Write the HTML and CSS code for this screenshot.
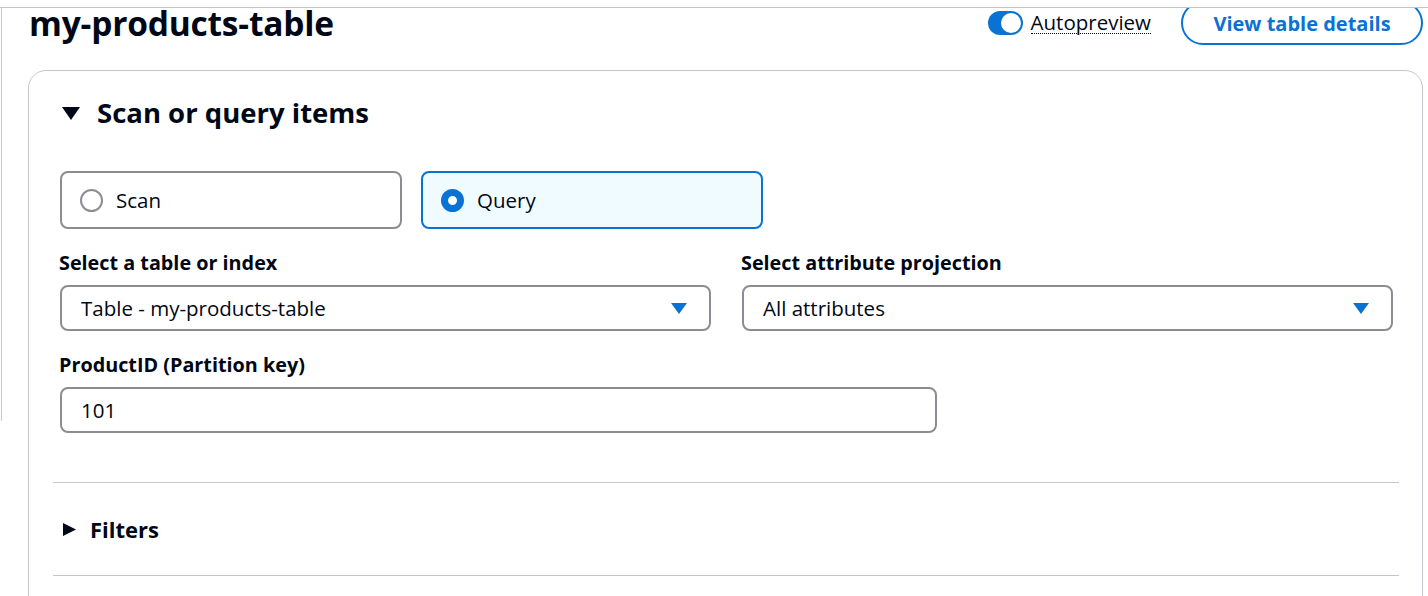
FILE: index.html
```html
<!DOCTYPE html>
<html lang="en">
<head>
<meta charset="utf-8">
<title>my-products-table</title>
<link rel="stylesheet" href="styles.css">
</head>
<body>
<div class="viewport">
  <div class="rail"></div>
  <main class="page">
    <header class="page-header">
      <h1 class="title">my-products-table</h1>
      <div class="actions">
        <label class="toggle">
          <span class="toggle-track"><span class="toggle-knob"></span></span>
          <span class="toggle-label">Autopreview</span>
        </label>
        <button class="btn-outline" type="button">View table details</button>
      </div>
    </header>

    <section class="card">
      <div class="card-header">
        <svg class="caret-down" width="18" height="13" viewBox="0 0 18 13"><polygon points="0,0 18,0 9,13" fill="#000716"/></svg>
        <h2 class="card-title">Scan or query items</h2>
      </div>

      <div class="card-body">
        <div class="tiles">
          <div class="tile">
            <span class="radio"></span>
            <span class="tile-text">Scan</span>
          </div>
          <div class="tile tile-selected">
            <span class="radio radio-checked"></span>
            <span class="tile-text">Query</span>
          </div>
        </div>

        <div class="field-grid">
          <div class="field">
            <div class="field-label">Select a table or index</div>
            <div class="select">
              <span>Table - my-products-table</span>
              <svg class="select-caret" width="16" height="11" viewBox="0 0 16 11"><polygon points="0,0 16,0 8,11" fill="#0972d3"/></svg>
            </div>
          </div>
          <div class="field">
            <div class="field-label">Select attribute projection</div>
            <div class="select">
              <span>All attributes</span>
              <svg class="select-caret" width="16" height="11" viewBox="0 0 16 11"><polygon points="0,0 16,0 8,11" fill="#0972d3"/></svg>
            </div>
          </div>
        </div>

        <div class="field field-key">
          <div class="field-label">ProductID (Partition key)</div>
          <div class="input">101</div>
        </div>
      </div>

      <div class="divider"></div>
      <div class="filters-row">
        <svg class="caret-right" width="13" height="13" viewBox="0 0 13 13"><polygon points="0,0 13,6.5 0,13" fill="#000716"/></svg>
        <h3 class="filters-title">Filters</h3>
      </div>
      <div class="divider"></div>
      <div class="card-tail"></div>
    </section>
  </main>
</div>
</body>
</html>
```

FILE: styles.css
```css
* { box-sizing: border-box; }

html, body {
  margin: 0;
  padding: 0;
  background: #ffffff;
}

body {
  font-family: "Open Sans", "Noto Sans", sans-serif;
  color: #000716;
  width: 1428px;
  height: 596px;
  overflow: hidden;
}

.viewport {
  margin-top: 7px;
  border-top: 1px solid #c6c6cd;
  height: 589px;
  overflow: hidden;
  display: flex;
  align-items: flex-start;
}

.rail {
  width: 0;
  height: 413px;
  margin-left: 1px;
  border-left: 1px solid #c6c6cd;
  border-bottom-left-radius: 4px;
  flex: none;
}

.page {
  flex: 1;
  padding-left: 26px;
  padding-right: 5px;
}

.page-header {
  margin-top: -7px;
  height: 44px;
  display: flex;
  align-items: center;
  justify-content: space-between;
}

.title {
  margin: 0 0 0 1px;
  font-size: 33.5px;
  font-weight: 700;
  letter-spacing: -0.2px;
  line-height: 30px;
}

.actions {
  display: flex;
  align-items: center;
  gap: 30px;
}

.toggle {
  display: flex;
  align-items: center;
  gap: 8px;
  margin-top: -1px;
}

.toggle-track {
  width: 35px;
  height: 24px;
  border-radius: 12px;
  background: #0972d3;
  display: flex;
  align-items: center;
  justify-content: flex-end;
  padding-right: 2px;
}

.toggle-knob {
  width: 20px;
  height: 20px;
  border-radius: 50%;
  background: #ffffff;
}

.toggle-label {
  font-size: 20.5px;
  border-bottom: 1.5px dotted #000716;
  line-height: 22px;
}

.btn-outline {
  font-family: inherit;
  width: 242px;
  height: 44px;
  border: 2px solid #0972d3;
  border-radius: 22px;
  background: #ffffff;
  color: #0972d3;
  font-size: 20px;
  font-weight: 700;
  padding: 0;
}

.card {
  margin-top: 25px;
  border: 1px solid #c6c6cd;
  border-radius: 18px;
  padding: 0 23px 0 24px;
}

.card-header {
  height: 84px;
  display: flex;
  align-items: center;
  padding-left: 9px;
  gap: 17px;
}

.card-title {
  margin: 0;
  font-size: 27.5px;
  font-weight: 700;
  line-height: 34px;
}

.card-body {
  padding: 0 6px 0 7px;
}

.tiles {
  margin-top: 16px;
  display: flex;
  gap: 19px;
}

.tile {
  width: 342px;
  height: 58px;
  border: 2px solid #8c8c94;
  border-radius: 8px;
  display: flex;
  align-items: center;
  padding-left: 18px;
  gap: 13px;
}

.tile-selected {
  border-color: #0972d3;
  background: #f0fbff;
}

.tile-text {
  font-size: 20.5px;
}

.radio {
  width: 23px;
  height: 23px;
  border-radius: 50%;
  border: 2.5px solid #8c8c94;
  background: #ffffff;
  flex: none;
}

.radio-checked {
  border: 7px solid #0972d3;
}

.field-grid {
  margin-top: 22px;
  display: grid;
  grid-template-columns: 1fr 1fr;
  column-gap: 31px;
}

.field-label {
  font-size: 19.8px;
  font-weight: 700;
  line-height: 24px;
  margin-bottom: 10px;
  margin-left: -1px;
}

.select,
.input {
  height: 46px;
  border: 2px solid #8c8c94;
  border-radius: 8px;
  display: flex;
  align-items: center;
  padding: 0 22px 0 19px;
  font-size: 20.5px;
}

.select {
  justify-content: space-between;
}

.field-key {
  margin-top: 22px;
  width: 877px;
}

.divider {
  height: 1px;
  background: #c6c6cd;
}

.card-body + .divider {
  margin-top: 49px;
}

.filters-row {
  height: 92px;
  display: flex;
  align-items: center;
  padding-left: 10px;
  gap: 14px;
}

.filters-title {
  margin: 0;
  font-size: 22px;
  font-weight: 700;
}

.card-tail {
  height: 60px;
}
```
